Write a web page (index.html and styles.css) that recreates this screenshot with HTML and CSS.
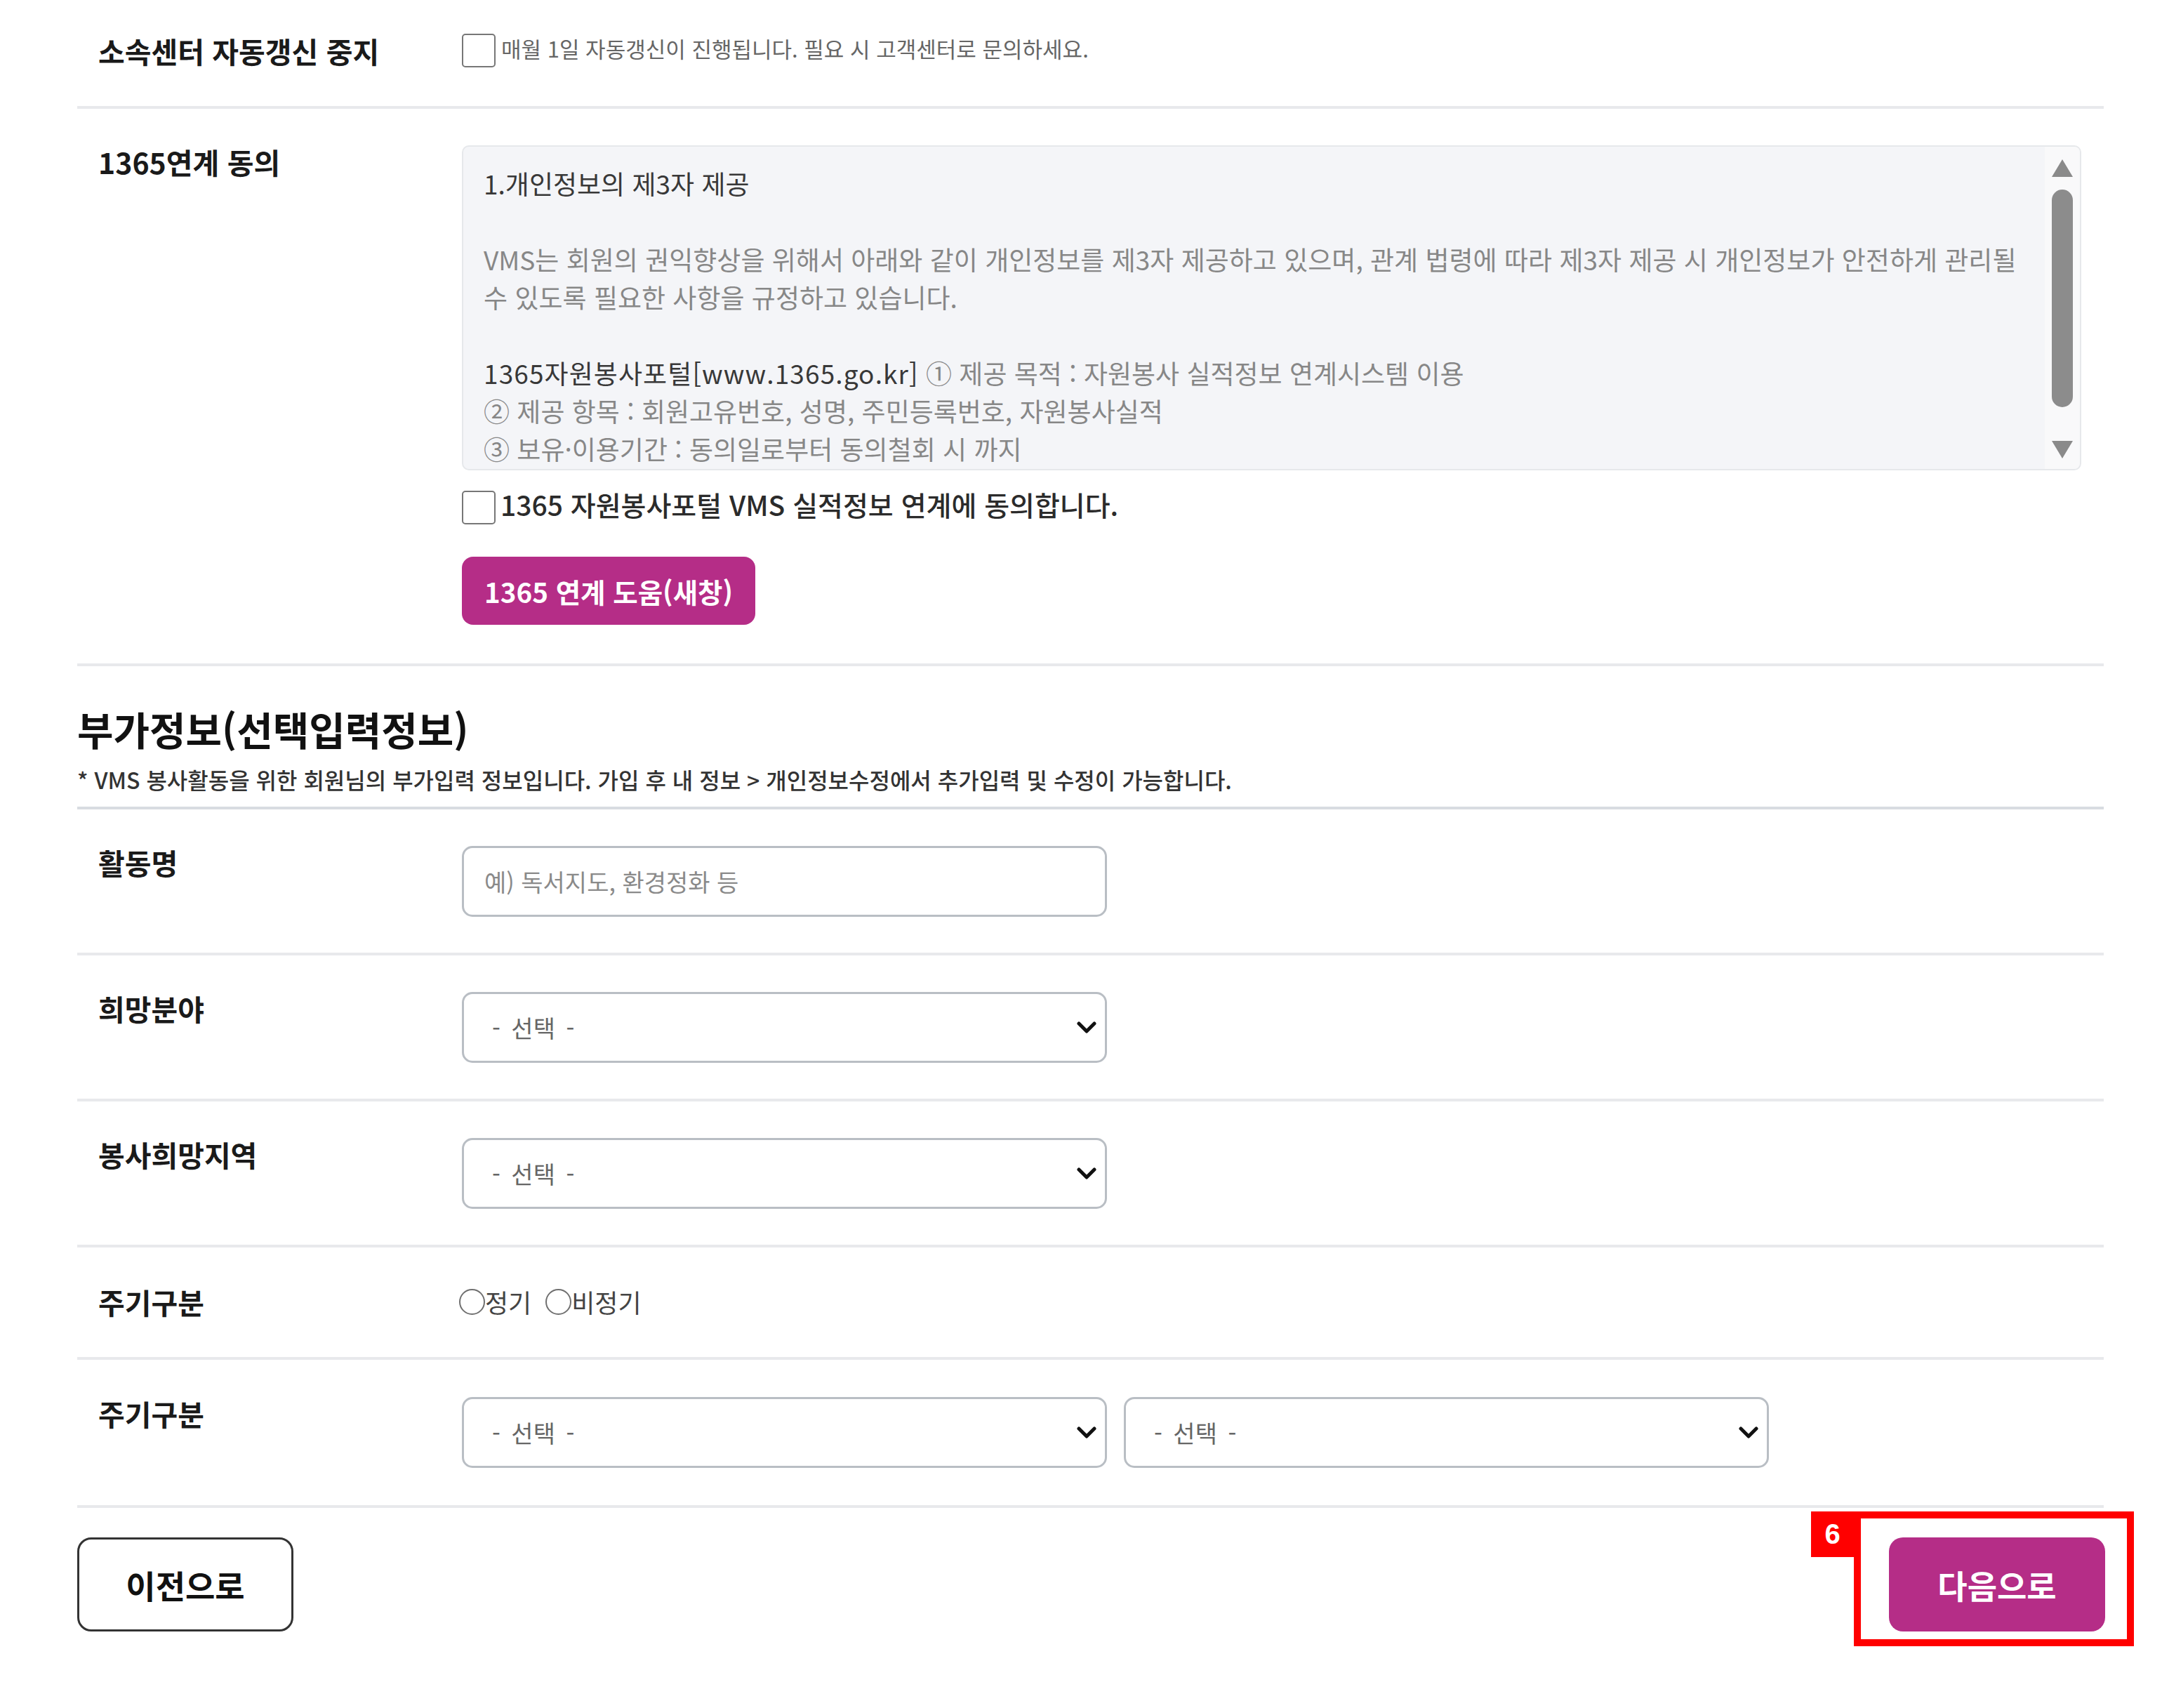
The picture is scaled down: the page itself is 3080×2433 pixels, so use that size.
FILE: index.html
```html
<!DOCTYPE html>
<html lang="ko">
<head>
<meta charset="utf-8">
<title>회원가입 - 부가정보</title>
<link rel="stylesheet" href="styles.css">
</head>
<body>
<div class="page">
  <div class="form-row form-row--first">
    <div class="form-label">소속센터 자동갱신 중지</div>
    <div class="field">
      <label class="inline-check">
        <input type="checkbox" class="checkbox">
        <span class="hint">매월 1일 자동갱신이 진행됩니다. 필요 시 고객센터로 문의하세요.</span>
      </label>
    </div>
  </div>

  <div class="form-row form-row--agree">
    <div class="form-label">1365연계 동의</div>
    <div class="field">
      <div class="terms-box">
        <div class="terms-text">
          <p class="terms-title">1.개인정보의 제3자 제공</p>
          <p>VMS는 회원의 권익향상을 위해서 아래와 같이 개인정보를 제3자 제공하고 있으며, 관계 법령에 따라 제3자 제공 시 개인정보가 안전하게 관리될<br>수 있도록 필요한 사항을 규정하고 있습니다.</p>
          <p><span class="terms-strong">1365자원봉사포털[www.1365.go.kr]</span> ① 제공 목적 : 자원봉사 실적정보 연계시스템 이용<br>② 제공 항목 : 회원고유번호, 성명, 주민등록번호, 자원봉사실적<br>③ 보유·이용기간 : 동의일로부터 동의철회 시 까지</p>
        </div>
        <div class="scrollbar">
          <span class="scroll-up"></span>
          <span class="scroll-thumb"></span>
          <span class="scroll-down"></span>
        </div>
      </div>
      <label class="agree">
        <input type="checkbox" class="checkbox">
        <span class="agree-text">1365 자원봉사포털 VMS 실적정보 연계에 동의합니다.</span>
      </label>
      <button type="button" class="btn-help">1365 연계 도움(새창)</button>
    </div>
  </div>

  <div class="section-head">
    <h2 class="section-title">부가정보(선택입력정보)</h2>
    <p class="section-note">* VMS 봉사활동을 위한 회원님의 부가입력 정보입니다. 가입 후 내 정보 &gt; 개인정보수정에서 추가입력 및 수정이 가능합니다.</p>
  </div>

  <div class="form-row">
    <div class="form-label">활동명</div>
    <div class="field">
      <input type="text" class="text-input" placeholder="예) 독서지도, 환경정화 등">
    </div>
  </div>

  <div class="form-row">
    <div class="form-label">희망분야</div>
    <div class="field">
      <div class="select-wrap">
        <select class="select"><option>- 선택 -</option></select>
        <svg class="chevron" viewBox="0 0 28 18"><polyline points="3,3 14,14 25,3" /></svg>
      </div>
    </div>
  </div>

  <div class="form-row">
    <div class="form-label">봉사희망지역</div>
    <div class="field">
      <div class="select-wrap">
        <select class="select"><option>- 선택 -</option></select>
        <svg class="chevron" viewBox="0 0 28 18"><polyline points="3,3 14,14 25,3" /></svg>
      </div>
    </div>
  </div>

  <div class="form-row form-row--radio">
    <div class="form-label">주기구분</div>
    <div class="field">
      <div class="radio-group">
        <label class="radio-item"><input type="radio" name="cycle" class="radio"><span>정기</span></label>
        <label class="radio-item"><input type="radio" name="cycle" class="radio"><span>비정기</span></label>
      </div>
    </div>
  </div>

  <div class="form-row form-row--last">
    <div class="form-label">주기구분</div>
    <div class="field">
      <div class="select-pair">
        <div class="select-wrap">
          <select class="select"><option>- 선택 -</option></select>
          <svg class="chevron" viewBox="0 0 28 18"><polyline points="3,3 14,14 25,3" /></svg>
        </div>
        <div class="select-wrap">
          <select class="select"><option>- 선택 -</option></select>
          <svg class="chevron" viewBox="0 0 28 18"><polyline points="3,3 14,14 25,3" /></svg>
        </div>
      </div>
    </div>
  </div>

  <div class="actions">
    <button type="button" class="btn-prev">이전으로</button>
    <div class="next-wrap">
      <button type="button" class="btn-next">다음으로</button>
      <span class="annot-box"></span>
      <span class="annot-num">6</span>
    </div>
  </div>
</div>
</body>
</html>
```

FILE: styles.css
```css
* { box-sizing: border-box; }
html, body { margin: 0; padding: 0; background: #ffffff; }
body {
  font-family: "Noto Sans CJK KR", "Noto Sans", sans-serif;
  color: #222222;
}
.page {
  width: 2887px;
  margin-left: 110px;
}

.form-row {
  display: grid;
  grid-template-columns: 548px 1fr;
  padding: 52px 0 51px;
  border-bottom: 4px solid #e8e9ec;
}
.form-row--first {
  align-items: center;
  padding-top: 44px;
  padding-bottom: 52px;
}
.form-row--agree { padding-bottom: 55px; }
.form-row--radio { padding: 54px 0 56px; }
.form-row--last { padding-top: 53px; padding-bottom: 53px; }

.form-label {
  padding-left: 30px;
  font-size: 41px;
  font-weight: 700;
  line-height: 46px;
  color: #1a1a1a;
}

.field {
  display: flex;
  flex-direction: column;
  align-items: flex-start;
}

.inline-check {
  display: flex;
  align-items: center;
  gap: 8px;
  height: 55px;
}
.checkbox {
  appearance: none;
  -webkit-appearance: none;
  flex: none;
  width: 48px;
  height: 48px;
  margin: 0;
  border: 2px solid #777777;
  border-radius: 5px;
  background: #ffffff;
}
.hint {
  margin-top: -6px;
  font-size: 31px;
  color: #666666;
}

/* terms box */
.terms-box {
  display: flex;
  width: 2307px;
  height: 463px;
  background: #f4f5f8;
  border: 2px solid #e6e8eb;
  border-radius: 10px;
  overflow: hidden;
}
.terms-text {
  flex: 1;
  padding: 25px 0 0 29px;
  font-size: 37px;
  line-height: 54px;
  color: #878787;
  overflow: hidden;
}
.terms-text p { margin: 0 0 54px; }
.terms-title, .terms-strong { color: #383838; }
.terms-strong { letter-spacing: 1.1px; }

.scrollbar {
  flex: none;
  width: 50px;
  display: flex;
  flex-direction: column;
  align-items: center;
  background: #f9f9fa;
}
.scroll-up {
  margin-top: 18px;
  width: 0;
  height: 0;
  border-left: 15px solid transparent;
  border-right: 15px solid transparent;
  border-bottom: 25px solid #8a8a8a;
}
.scroll-thumb {
  margin-top: 18px;
  width: 30px;
  height: 310px;
  border-radius: 15px;
  background: #8c8c8c;
}
.scroll-down {
  margin-top: auto;
  margin-bottom: 15px;
  width: 0;
  height: 0;
  border-left: 15px solid transparent;
  border-right: 15px solid transparent;
  border-top: 25px solid #8a8a8a;
}

.agree {
  display: flex;
  align-items: center;
  gap: 7px;
  height: 51px;
  margin-top: 27px;
  font-size: 39px;
  font-weight: 500;
  color: #2b2b2b;
}
.agree-text { margin-top: -10px; }

.btn-help {
  margin-top: 45px;
  height: 97px;
  padding: 0 32px;
  border: none;
  border-radius: 16px;
  background: #b52d87;
  color: #ffffff;
  font-family: inherit;
  font-size: 38.5px;
  font-weight: 700;
}

/* section heading */
.section-head {
  padding: 53px 0 18px;
  border-bottom: 4px solid #d8dce1;
}
.section-title {
  margin: 0;
  font-size: 56px;
  line-height: 72px;
  font-weight: 700;
  color: #111111;
}
.section-note {
  margin: 15px 0 0;
  font-size: 32px;
  line-height: 42px;
  font-weight: 500;
  color: #333333;
}

/* inputs */
.text-input {
  width: 919px;
  height: 101px;
  padding: 0 29px;
  border: 3px solid #b9bec4;
  border-radius: 15px;
  background: #ffffff;
  font-family: inherit;
  font-size: 34px;
  color: #333333;
}
.text-input::placeholder { color: #8a8a8a; }

.select-wrap {
  position: relative;
  width: 919px;
}
.select {
  appearance: none;
  -webkit-appearance: none;
  display: block;
  width: 100%;
  height: 101px;
  padding: 0 40px;
  border: 3px solid #b9bec4;
  border-radius: 15px;
  background: #ffffff;
  font-family: inherit;
  font-size: 34px;
  word-spacing: 6px;
  color: #666666;
}
.chevron {
  position: absolute;
  right: 15px;
  top: 50%;
  width: 28px;
  height: 18px;
  transform: translateY(-50%);
  pointer-events: none;
}
.chevron polyline {
  fill: none;
  stroke: #111111;
  stroke-width: 5;
  stroke-linecap: round;
  stroke-linejoin: round;
}
.select-pair {
  display: flex;
  gap: 24px;
}

/* radios */
.radio-group {
  display: flex;
  align-items: center;
  height: 46px;
}
.radio-item {
  display: flex;
  align-items: center;
  margin-right: 20px;
  font-size: 36px;
  color: #444444;
}
.radio-item:first-child { margin-left: -4px; }
.radio {
  appearance: none;
  -webkit-appearance: none;
  flex: none;
  width: 37px;
  height: 37px;
  margin: 0;
  border: 2px solid #707070;
  border-radius: 50%;
  background: #ffffff;
}

/* bottom actions */
.actions {
  display: flex;
  justify-content: space-between;
  align-items: flex-start;
  margin-top: 42px;
  padding-bottom: 105px;
}
.btn-prev,
.btn-next {
  width: 308px;
  height: 134px;
  border-radius: 20px;
  font-family: inherit;
  font-size: 46px;
  font-weight: 700;
}
.btn-prev {
  border: 3px solid #333333;
  background: #ffffff;
  color: #111111;
}
.btn-next {
  display: block;
  border: none;
  background: #b52d87;
  color: #ffffff;
}
.next-wrap {
  position: relative;
  margin-right: -2px;
}
.annot-box {
  position: absolute;
  left: -50px;
  top: -37px;
  width: 399px;
  height: 192px;
  border: 10px solid #ff0000;
}
.annot-num {
  position: absolute;
  left: -111px;
  top: -37px;
  width: 61px;
  height: 65px;
  display: flex;
  align-items: center;
  justify-content: center;
  background: #ff0000;
  color: #ffffff;
  font-family: "Liberation Sans", sans-serif;
  font-size: 40px;
  font-weight: 700;
}
```
